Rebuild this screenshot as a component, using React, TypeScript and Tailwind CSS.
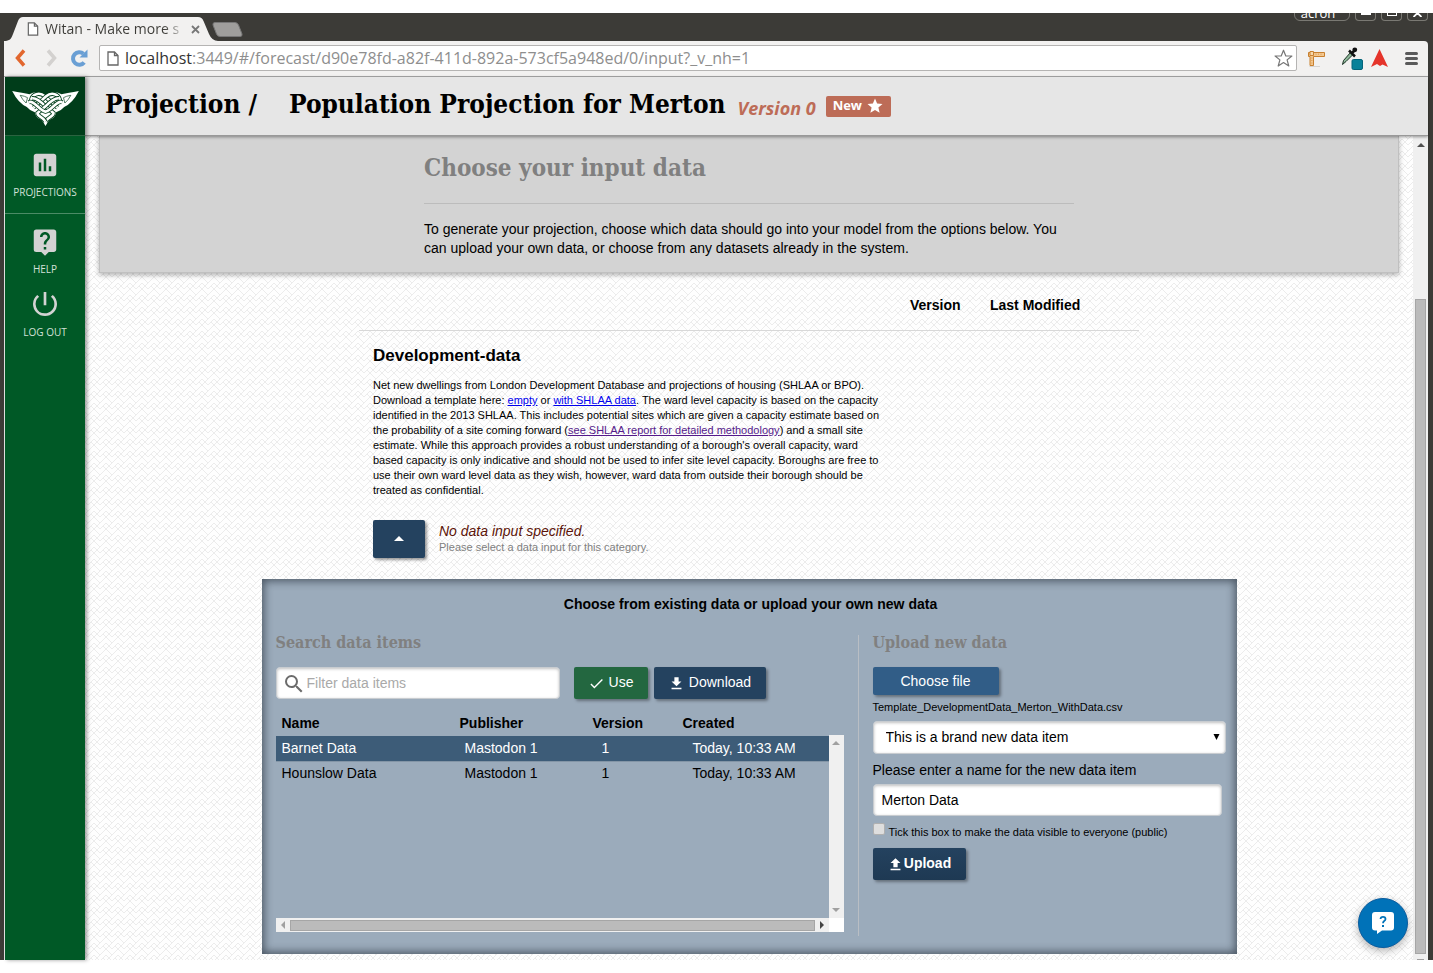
import React from "react";
import { MdAssessment, MdCheck, MdFileDownload, MdFileUpload, MdLiveHelp, MdPowerSettingsNew, MdSearch, MdStar, MdArrowDropUp } from "react-icons/md";

const ROWS = [
  { name: "Barnet Data", publisher: "Mastodon 1", version: "1", created: "Today, 10:33 AM", selected: true },
  { name: "Hounslow Data", publisher: "Mastodon 1", version: "1", created: "Today, 10:33 AM", selected: false },
];

function PageIcon({ className }: { className: string }) {
  return (
    <svg className={className} viewBox="0 0 12 15" fill="#fff" stroke="#666" strokeWidth="1.3" aria-hidden="true">
      <path d="M1 1h6.5L11 4.500V14H1z" />
      <path d="M7.500 1v3.500H11" fill="none" />
    </svg>
  );
}

function TitleBar() {
  return (
    <div className="flex h-7 shrink-0 items-end justify-between overflow-hidden bg-[#3c3b37]">
      <div className="flex h-full items-end">
        <div className="relative ml-1 flex h-6 w-[214px] items-center pl-[23px]">
          <svg className="absolute inset-0 h-full w-full" viewBox="0 0 214 24" preserveAspectRatio="none" aria-hidden="true">
            <path d="M0 24C6 24 7 22 9 17L14 4Q15.500 0 19 0H194Q198 0 199.500 4L205 17Q208 24 214 24z" fill="#f2f1f0" />
          </svg>
          <PageIcon className="relative h-[14px] w-3" />
          <span className="relative ml-[6px] w-[140px] overflow-hidden bg-linear-to-r from-[#3c3b37] from-85% to-[#f2f1f0] bg-clip-text text-[14px] leading-6 whitespace-nowrap text-transparent">
            Witan - Make more s
          </span>
          <button className="relative ml-[6px]" aria-label="Close tab">
            <svg className="h-[9px] w-[9px]" viewBox="0 0 9 9" stroke="#777" strokeWidth="1.8" aria-hidden="true">
              <path d="M1 1l7 7M8 1L1 8" />
            </svg>
          </button>
        </div>
        <button className="mb-1 -ml-[6px]" aria-label="New tab">
          <svg className="h-[15px] w-[31px]" viewBox="0 0 31 15" aria-hidden="true">
            <path d="M3 .5H23Q25.500 .5 26.500 3L30 12Q30.500 14.500 28 14.500H8Q5.500 14.500 4.500 12L1 3Q.5 .5 3 .5z" fill="#9f9e9c" stroke="#777" />
          </svg>
        </button>
      </div>
      <div className="flex h-full items-start gap-[5px] pr-[5px] text-white">
        <button className="-mt-3 h-5 w-14 rounded-md border border-[#7a7973] pr-2 text-[13px] leading-[22px]">acron</button>
        <button className="flex h-2 w-[21px] items-start justify-center rounded-b-sm border border-t-0 border-[#7a7973]" aria-label="Minimize">
          <span className="h-[2px] w-[10px] bg-white" />
        </button>
        <button className="flex h-2 w-[21px] items-start justify-center rounded-b-sm border border-t-0 border-[#7a7973]" aria-label="Maximize">
          <span className="h-[3px] w-[10px] border border-t-0 border-white" />
        </button>
        <button className="flex h-2 w-[21px] items-start justify-center rounded-b-sm border border-t-0 border-[#7a7973]" aria-label="Close">
          <svg className="h-1 w-[9px]" viewBox="0 0 9 4" stroke="#fff" strokeWidth="1.8" aria-hidden="true">
            <path d="M.5 4L4.500 0L8.500 4" fill="none" />
          </svg>
        </button>
      </div>
    </div>
  );
}

function Toolbar() {
  return (
    <div className="mr-[5px] ml-1 flex h-9 shrink-0 items-center rounded-tr-sm border-b border-[#a9a9a9] bg-[#f2f1f0] pr-[10px] pb-px pl-[10px]">
      <button aria-label="Back">
        <svg className="h-[18px] w-3" viewBox="0 0 12 18" fill="none" stroke="#e2672e" strokeWidth="3.500" aria-hidden="true">
          <path d="M10 1.500L3.500 9L10 16.500" />
        </svg>
      </button>
      <button className="ml-5" aria-label="Forward">
        <svg className="h-[18px] w-3" viewBox="0 0 12 18" fill="none" stroke="#d3d1cf" strokeWidth="3.500" aria-hidden="true">
          <path d="M2 1.500L8.500 9L2 16.500" />
        </svg>
      </button>
      <button className="ml-3" aria-label="Reload">
        <svg className="h-[19px] w-[18px]" viewBox="0 0 18 19" aria-hidden="true">
          <path d="M14.200 13.500A6.300 6.300 0 1 1 13.500 4.800" fill="none" stroke="#6a9fd4" strokeWidth="4" />
          <path d="M17.500 .5V8.500H9.500z" fill="#6a9fd4" />
        </svg>
      </button>
      <div className="ml-[11px] flex h-[26px] min-w-0 flex-1 items-center rounded-xs border border-[#b5b4b3] bg-white px-[7px]">
        <PageIcon className="h-[15px] w-3 shrink-0" />
        <a href="#input" className="ml-[6px] min-w-0 flex-1 overflow-hidden text-[16px] whitespace-nowrap text-[#8e8e8e]">
          <span className="text-[#333]">localhost</span>:3449/#/forecast/d90e78fd-a82f-411d-892a-573cf5a948ed/0/input?_v_nh=1
        </a>
        <button aria-label="Bookmark" className="-mr-1">
          <svg className="h-[19px] w-[19px]" viewBox="0 0 19 19" fill="#fff" stroke="#777" strokeWidth="1.200" strokeLinejoin="round" aria-hidden="true">
            <path d="M9.500 1.200L11.800 7H17.900L13.100 10.900L14.800 17L9.500 13.500L4.200 17L5.900 10.900L1.100 7H7.200z" />
          </svg>
        </button>
      </div>
      <button className="ml-[11px]" aria-label="Ruler">
        <svg className="h-[17px] w-[17px]" viewBox="0 0 17 17" aria-hidden="true">
          <path d="M1.500 16.500H12" stroke="#d5d3d1" />
          <path d="M.5 2.500H16.500V6.500H5.500V15.500H2V6.500H.5z" fill="#f4c890" stroke="#c8802f" />
          <path d="M2 1.500h3.500v4H2z" fill="#f7d9ae" stroke="#c8802f" />
          <path d="M8 3.500v1.500M10.500 3.500v1.500M13 3.500v1.500M3 8h1.500M3 10.500h1.500M3 13h1.500" stroke="#dda05a" strokeWidth=".8" />
        </svg>
      </button>
      <button className="ml-4" aria-label="Colour picker">
        <svg className="mt-px h-[23px] w-[22px]" viewBox="0 0 22 23" aria-hidden="true">
          <path d="M1.500 17.500L2.500 13.500L9.500 5.500L12 7.500L5 14.500z" fill="#8fb79a" stroke="#1c3325" />
          <path d="M8 3.500L14 9.500M10.500 6.500L14 3" stroke="#111" strokeWidth="2.500" />
          <circle cx="13.800" cy="2.800" r="2.400" fill="#111" />
          <rect x="11" y="12.500" width="10.500" height="10" rx="1.500" fill="#088199" stroke="#04647a" />
        </svg>
      </button>
      <button className="ml-2" aria-label="Extension">
        <svg className="h-[18px] w-[17px]" viewBox="0 0 17 18" aria-hidden="true">
          <path d="M8.500 0L17 18L11.500 15.500L9 17L6 15L0 18z" fill="#e5342a" />
        </svg>
      </button>
      <button className="ml-[17px] flex w-[13px] flex-col gap-[2px]" aria-label="Menu">
        <span className="h-[3px] rounded-full bg-[#5a5a5a]" />
        <span className="h-[3px] rounded-full bg-[#5a5a5a]" />
        <span className="h-[3px] rounded-full bg-[#5a5a5a]" />
      </button>
    </div>
  );
}

function KnotLogo() {
  const strands = [
    "M56 30C60 8 82 2 98 16L136 50",
    "M144 30C140 8 118 2 102 16L64 50",
    "M60 22C72 20 84 30 100 46L124 66C124 78 106 78 100 92",
    "M140 22C128 20 116 30 100 46L76 66C76 78 94 78 100 92",
    "M50 34C64 26 84 60 100 62C116 60 136 26 150 34",
  ];
  return (
    <svg className="h-[35px] w-[67px]" viewBox="0 0 200 105" fill="none" aria-hidden="true">
      <path
        d="M0 0Q32 6 52 10Q64 2 80 4Q92 4 100 12Q108 4 120 4Q136 2 148 10Q168 6 200 0Q182 36 156 48Q146 60 132 64Q128 84 112 86Q106 94 100 105Q94 94 88 86Q72 84 68 64Q54 60 44 48Q18 36 0 0z"
        fill="#fff"
      />
      {strands.map((d) => (
        <g key={d}>
          <path d={d} stroke="#003d1a" strokeWidth="13" />
          <path d={d} stroke="#fff" strokeWidth="8" />
        </g>
      ))}
      <path d="M24 13Q38 15 46 20L42 36Q32 28 24 13zM176 13Q162 15 154 20L158 36Q168 28 176 13z" stroke="#003d1a" strokeWidth="2" fill="#fff" />
    </svg>
  );
}

function Sidebar() {
  return (
    <nav className="relative z-20 flex w-20 shrink-0 flex-col bg-[#005926] text-[10px] leading-4 text-[#d3e0d8] shadow-[2px_0_4px_rgba(0,0,0,0.4)]">
      <a href="#home" aria-label="Witan" className="flex h-[59px] items-center justify-center border-b border-[#2b6340] bg-[#003d1a] pt-1">
        <KnotLogo />
      </a>
      <a href="#projections" className="flex h-[78px] flex-col items-center border-b border-[#4c8b66] pt-[14px]">
        <MdAssessment className="h-[30px] w-[30px] text-[#d3d3d3]" />
        <span className="mt-1">PROJECTIONS</span>
      </a>
      <a href="#help" className="flex flex-col items-center pt-[13px]">
        <MdLiveHelp className="h-[30px] w-[30px] text-[#d3d3d3]" />
        <span className="mt-1">HELP</span>
      </a>
      <a href="#logout" className="flex flex-col items-center pt-[11px]">
        <MdPowerSettingsNew className="h-8 w-8 text-[#d3d3d3]" />
        <span className="mt-1">LOG OUT</span>
      </a>
    </nav>
  );
}

function PageHeader() {
  return (
    <header className="relative z-10 flex h-[59px] shrink-0 items-center border-b border-[#999] bg-[#e6e6e6] pb-1 pl-5 shadow-[0_1px_3px_rgba(0,0,0,0.4)]">
      <h1 className="flex items-baseline font-['DejaVu_Serif_Condensed','DejaVu_Serif',serif] text-[26px] font-bold whitespace-nowrap text-black">
        <span className="w-[184px]">Projection /</span>
        <span>Population Projection for Merton</span>
      </h1>
      <em className="mt-2 ml-3 text-[18px] font-bold text-[#bd6c57]">Version 0</em>
      <span className="mt-1 ml-[10px] flex h-[21px] items-center gap-1 rounded-xs bg-[#bd6c57] px-[7px] text-[13px] font-bold text-white">
        New <MdStar className="h-[18px] w-[18px]" />
      </span>
    </header>
  );
}

function Weave() {
  return (
    <svg className="absolute inset-0 h-full w-full" aria-hidden="true">
      <defs>
        <pattern id="weave" width="12" height="12" patternUnits="userSpaceOnUse">
          <path d="M0 6L6 0M3 9L9 3M6 12L12 6M0 0L3 3M3 -3L6 0M6 6L9 9M0 6L3 9M9 3L12 6M9 9L12 12" stroke="#ececec" strokeWidth="1" fill="none" />
        </pattern>
      </defs>
      <rect width="100%" height="100%" fill="#fefefe" />
      <rect width="100%" height="100%" fill="url(#weave)" />
    </svg>
  );
}

function Banner() {
  return (
    <section className="mx-[14px] border border-t-0 border-[#c0c0c0] bg-[#d3d3d3] shadow-[0_2px_5px_rgba(0,0,0,0.3)]">
      <div className="mx-auto h-[136px] max-w-[650px] pt-[14px]">
        <h2 className="font-['DejaVu_Serif_Condensed','DejaVu_Serif',serif] text-[24px] leading-9 font-bold text-[#808080]">Choose your input data</h2>
        <p className="mt-[17px] border-t border-[#bcbcbc] pt-4 text-[14px] leading-[19px]">
          To generate your projection, choose which data should go into your model from the options below. You can upload your own data, or choose from any datasets already in the system.
        </p>
      </div>
    </section>
  );
}

function Category() {
  return (
    <section className="mx-auto max-w-[780px]">
      <div className="flex h-[58px] items-center border-b border-[#d8d8d8] pt-2 text-[14px] font-bold">
        <span className="ml-[551px] w-20">Version</span>
        <span>Last Modified</span>
      </div>
      <div className="pl-[14px]">
        <h3 className="mt-[13px] text-[17px] leading-6 font-bold">Development-data</h3>
        <p className="mt-[10px] max-w-[516px] text-[11px] leading-[15px]">
          Net new dwellings from London Development Database and projections of housing (SHLAA or BPO). Download a template here:{" "}
          <a href="#empty" className="text-[#0000ee] underline">empty</a> or <a href="#shlaa" className="text-[#0000ee] underline">with SHLAA data</a>. The ward level capacity is based on the capacity identified in the 2013 SHLAA. This includes potential sites which are given a capacity estimate based on the probability of a site coming forward (
          <a href="#report" className="text-[#551a8b] underline">see SHLAA report for detailed methodology</a>) and a small site estimate. While this approach provides a robust understanding of a borough's overall capacity, ward based capacity is only indicative and should not be used to infer site level capacity. Boroughs are free to use their own ward level data as they wish, however, ward data from outside their borough should be treated as confidential.
        </p>
        <div className="mt-[22px] flex gap-[14px]">
          <button aria-label="Collapse" className="flex h-[38px] w-[52px] items-center justify-center rounded-xs bg-[#24425f] text-white shadow-[2px_2px_3px_rgba(0,0,0,0.4)]">
            <MdArrowDropUp className="h-6 w-6" />
          </button>
          <div>
            <p className="pt-[2px] text-[14px] leading-[18px] text-[#5c1408] italic">No data input specified.</p>
            <p className="text-[11px] leading-[15px] text-[#808080]">Please select a data input for this category.</p>
          </div>
        </div>
      </div>
    </section>
  );
}

function Arrow({ className, d }: { className: string; d: string }) {
  return (
    <svg className={className} viewBox="0 0 8 8" fill="currentColor" aria-hidden="true">
      <path d={d} />
    </svg>
  );
}

const UP = "M0 6L4 2L8 6z";
const DOWN = "M0 2L4 6L8 2z";
const LEFT = "M6 0L2 4L6 8z";
const RIGHT = "M2 0L6 4L2 8z";

function DataTable() {
  return (
    <div className="mt-3">
      <div className="flex">
        <div className="min-w-0 flex-1">
          <table className="w-full table-fixed border-collapse text-left text-[14px]">
            <thead>
              <tr className="h-[25px]">
                <th className="w-[178px] pl-[6px]">Name</th>
                <th className="w-[133px] pl-[6px]">Publisher</th>
                <th className="w-[90px] pl-[6px]">Version</th>
                <th className="pl-[6px]">Created</th>
              </tr>
            </thead>
            <tbody>
              {ROWS.map((r) => (
                <tr key={r.name} className={r.selected ? "h-[25px] border-b border-[#8395a6] bg-[#3d5c78] text-white" : "h-[25px]"}>
                  <td className="pl-[6px]">{r.name}</td>
                  <td className="pl-[11px]">{r.publisher}</td>
                  <td className="pl-[15px]">{r.version}</td>
                  <td className="pl-4">{r.created}</td>
                </tr>
              ))}
            </tbody>
          </table>
        </div>
        <div className="mt-6 flex h-[183px] w-[15px] flex-col items-center justify-between bg-[#f0f0f0] py-1 text-[#a0a0a0]">
          <Arrow className="h-2 w-2" d={UP} />
          <Arrow className="h-2 w-2" d={DOWN} />
        </div>
      </div>
      <div className="flex h-[14px] bg-white pr-[15px]">
        <div className="flex flex-1 items-center gap-[3px] bg-[#f0f0f0] px-[3px] text-[#a0a0a0]">
          <Arrow className="h-2 w-2" d={LEFT} />
          <div className="h-[11px] flex-1 border border-[#a6a6a6] bg-[#bbb]" />
          <Arrow className="h-2 w-2 text-[#444]" d={RIGHT} />
        </div>
      </div>
    </div>
  );
}

function DataPanel() {
  return (
    <section className="mx-auto mt-[21px] h-[375px] w-[975px] max-w-full bg-[#9babbb] pt-4 pr-[11px] pl-[14px] text-[14px] shadow-[inset_0_0_8px_2px_rgba(30,40,50,0.65)]">
      <h3 className="text-center leading-[18px] font-bold">Choose from existing data or upload your own new data</h3>
      <div className="mt-[22px] flex">
        <div className="h-[301px] w-[583px] shrink-0 border-r border-[#b9bec4] pr-[14px]">
          <h4 className="font-['DejaVu_Serif_Condensed','DejaVu_Serif',serif] text-[16px] leading-4 font-bold text-[#808080]">Search data items</h4>
          <div className="mt-4 flex">
            <label className="flex h-8 w-[284px] items-center rounded-sm border border-[#c8ccd0] bg-white pl-[5px] shadow-[inset_0_1px_3px_rgba(0,0,0,0.25)]">
              <MdSearch className="mt-[2px] h-6 w-6 shrink-0 text-[#6b6b6b]" />
              <input aria-label="Filter data items" placeholder="Filter data items" className="ml-px w-full min-w-0 bg-transparent outline-none placeholder:text-[#a9a9a9]" />
            </label>
            <button className="ml-[14px] flex h-8 w-[74px] items-center justify-center gap-1 rounded-xs bg-[#236740] pb-[2px] text-white shadow-[2px_2px_3px_rgba(0,0,0,0.35)]">
              <MdCheck className="mt-[2px] h-[17px] w-[17px]" /> Use
            </button>
            <button className="ml-[6px] flex h-8 w-28 items-center justify-center gap-1 rounded-xs bg-[#24425f] pb-[2px] text-white shadow-[2px_2px_3px_rgba(0,0,0,0.35)]">
              <MdFileDownload className="mt-[2px] h-[17px] w-[17px]" /> Download
            </button>
          </div>
          <DataTable />
        </div>
        <div className="min-w-0 flex-1 pl-[14px]">
          <h4 className="font-['DejaVu_Serif_Condensed','DejaVu_Serif',serif] text-[16px] leading-4 font-bold text-[#808080]">Upload new data</h4>
          <button className="mt-4 block h-7 w-[126px] rounded-xs bg-[#315d87] text-white shadow-[2px_2px_3px_rgba(0,0,0,0.35)]">Choose file</button>
          <p className="mt-[5px] text-[11px] leading-[15px]">Template_DevelopmentData_Merton_WithData.csv</p>
          <div className="relative mt-[6px]">
            <select aria-label="Data item" className="h-[33px] w-full appearance-none rounded-sm border border-[#c8ccd0] bg-white pl-3 shadow-[inset_0_1px_3px_rgba(0,0,0,0.25)]">
              <option>This is a brand new data item</option>
            </select>
            <svg className="pointer-events-none absolute top-[13px] right-[6px] h-[6px] w-[7px]" viewBox="0 0 7 6" aria-hidden="true">
              <path d="M.5 0H6.500L3.500 6z" />
            </svg>
          </div>
          <label htmlFor="item-name" className="mt-[7px] block leading-[18px]">Please enter a name for the new data item</label>
          <div className="pr-1">
            <input id="item-name" defaultValue="Merton Data" className="mt-[5px] block h-8 w-full rounded-sm border border-[#c8ccd0] bg-white px-2 shadow-[inset_0_1px_3px_rgba(0,0,0,0.25)]" />
          </div>
          <label className="mt-[7px] flex h-4 text-[11px]">
            <input type="checkbox" className="h-3 w-3 appearance-none rounded-xs border border-[#b0b0b0] bg-[#dedede]" />
            <span className="ml-1 leading-[18px]">Tick this box to make the data visible to everyone (public)</span>
          </label>
          <button className="mt-[9px] flex h-8 w-[93px] items-center justify-center rounded-xs bg-linear-to-b from-[#24425f] to-[#1e3953] pb-[2px] font-bold text-white shadow-[2px_2px_3px_rgba(0,0,0,0.35)]">
            <MdFileUpload className="mt-[2px] h-[17px] w-[17px]" /> Upload
          </button>
        </div>
      </div>
    </section>
  );
}

function PageScrollbar() {
  return (
    <div className="flex w-[15px] shrink-0 flex-col items-center overflow-hidden bg-[#f0f0f0] pt-[5px] text-[#505050]">
      <Arrow className="h-2 w-2 shrink-0" d={UP} />
      <div className="mt-[150px] w-[11px] flex-1 border border-[#a6a6a6] bg-[#bbb]" />
      <div className="mt-[5px] h-px w-[7px] bg-[#a0a0a0]" />
    </div>
  );
}

function HelpBubble() {
  return (
    <button aria-label="Help chat" className="absolute right-5 bottom-3 z-20 flex h-[50px] w-[50px] items-center justify-center rounded-full border border-[#0a5c9e] bg-[#0072b8] shadow-[0_3px_8px_rgba(0,0,0,0.3)]">
      <svg className="h-[22px] w-[22px]" viewBox="0 0 22 22" aria-hidden="true">
        <path d="M3 0H19Q22 0 22 3V15.500Q22 18.500 19 18.500H10L5 22V18.500H3Q0 18.500 0 15.500V3Q0 0 3 0z" fill="#fff" />
        <path d="M8.500 7Q8.700 4.800 11 4.800Q13.500 4.800 13.500 7Q13.500 8.200 12.200 9Q11 9.800 11 11.200" fill="none" stroke="#0072b8" strokeWidth="1.800" />
        <path d="M10 13h2v2h-2z" fill="#0072b8" />
      </svg>
    </button>
  );
}

export default function App() {
  return (
    <div className="flex h-screen flex-col bg-white py-[13px] font-['Open_Sans','Noto_Sans',sans-serif] text-black">
      <div className="flex min-h-0 flex-1 flex-col bg-[#3c3b37]">
        <TitleBar />
        <Toolbar />
        <div className="relative mr-[5px] ml-1 flex min-h-0 flex-1 border-l border-[#e8e8e8] bg-[#f0f0f0]">
          <Sidebar />
          <div className="flex min-w-0 flex-1 flex-col">
            <PageHeader />
            <div className="flex min-h-0 flex-1">
              <main className="relative min-w-0 flex-1 overflow-hidden font-['Liberation_Sans',Arial,sans-serif]">
                <Weave />
                <div className="relative">
                  <Banner />
                  <Category />
                  <DataPanel />
                </div>
              </main>
              <PageScrollbar />
            </div>
          </div>
          <HelpBubble />
        </div>
      </div>
    </div>
  );
}
